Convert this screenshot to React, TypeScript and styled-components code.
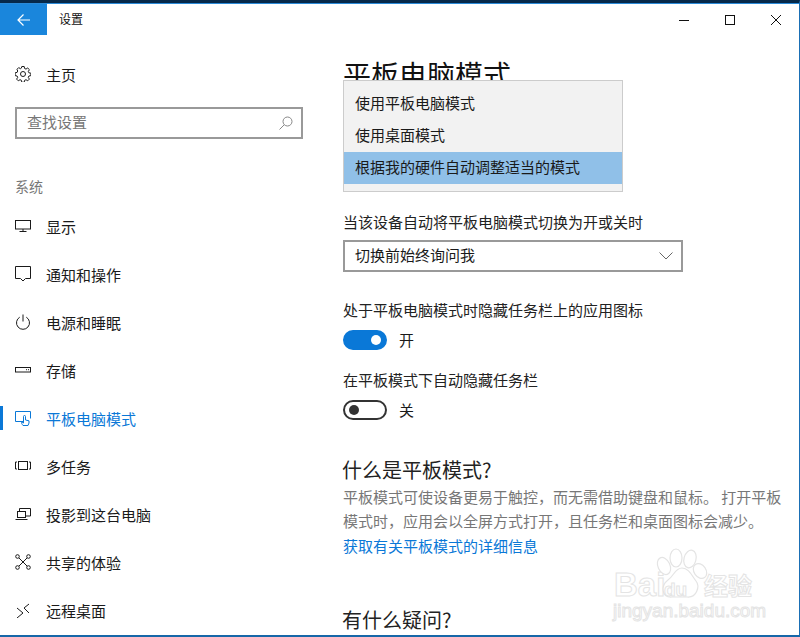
import React from 'react';
import styled, { createGlobalStyle } from 'styled-components';

const GlobalStyle = createGlobalStyle`
  html, body {
    margin: 0;
    padding: 0;
    background: #fff;
  }
  * {
    box-sizing: border-box;
  }
`;

const Win = styled.div`
  width: 800px;
  height: 637px;
  overflow: hidden;
  display: flex;
  flex-direction: column;
  position: relative;
  background: #fff;
  border-top: 3px solid #06294a;
  border-right: 1px solid #1a6fb5;
  border-bottom: 2px solid #1667a8;
  font-family: "Noto Sans CJK SC", "Liberation Sans", sans-serif;
  font-size: 15px;
  color: #1a1a1a;
`;

const TitleBar = styled.div`
  height: 32px;
  flex: none;
  display: flex;
  align-items: center;
  border-top: 1px solid #2a8ad8;
`;

const BackBtn = styled.div`
  width: 47px;
  height: 31px;
  background: #1a86dc;
  display: flex;
  align-items: center;
  justify-content: center;
`;

const TitleText = styled.div`
  margin-left: 12px;
  padding-bottom: 3px;
  font-size: 12px;
  color: #111;
`;

const WinBtns = styled.div`
  margin-left: auto;
  display: flex;
  height: 100%;
`;

const WinBtn = styled.div`
  width: 46px;
  display: flex;
  align-items: center;
  justify-content: center;
`;

const Body = styled.div`
  flex: 1;
  display: flex;
  min-height: 0;
`;

const Sidebar = styled.nav`
  width: 343px;
  flex: none;
  padding-top: 15px;
`;

const NavRow = styled.div<{ $active?: boolean }>`
  height: 48px;
  display: flex;
  align-items: center;
  padding-left: 15px;
  position: relative;
  color: ${(p) => (p.$active ? '#0a78d7' : '#1a1a1a')};
  svg {
    width: 16px;
    height: 16px;
    margin-right: 15px;
    flex: none;
    fill: none;
    stroke: currentColor;
    stroke-width: 1;
  }
  &::before {
    content: '';
    display: ${(p) => (p.$active ? 'block' : 'none')};
    position: absolute;
    left: 0;
    top: 12px;
    width: 3px;
    height: 24px;
    background: #0a78d7;
  }
`;

const Search = styled.div`
  width: 288px;
  height: 32px;
  margin: 9px 0 0 15px;
  border: 2px solid #999;
  display: flex;
  align-items: center;
  justify-content: space-between;
  padding: 0 8px 4px 10px;
  color: #777;
  svg {
    margin-top: 4px;
  }
`;

const GroupLabel = styled.div`
  margin: 35px 0 4px 15px;
  height: 24px;
  line-height: 24px;
  font-size: 14px;
  color: #777;
`;

const Main = styled.main`
  flex: 1;
  padding-right: 30px;
`;

const PageTitle = styled.h1`
  margin: 19px 0 0;
  height: 40px;
  line-height: 40px;
  font-size: 28px;
  font-weight: 400;
  color: #111;
`;

const ModeBlock = styled.div`
  position: relative;
  height: 116px;
`;

const Popup = styled.ul`
  position: absolute;
  top: -14px;
  left: 0;
  width: 280px;
  height: 112px;
  margin: 0;
  padding: 7px 0 0;
  list-style: none;
  background: #f2f2f2;
  border: 1px solid #ccc;
`;

const PopupItem = styled.li<{ $selected?: boolean }>`
  height: 32px;
  line-height: 30px;
  padding-left: 11px;
  background: ${(p) => (p.$selected ? '#90c0e8' : 'transparent')};
  white-space: nowrap;
`;

const FieldLabel = styled.div`
  height: 24px;
  line-height: 24px;
  white-space: nowrap;
  color: #222;
`;

const Select = styled.div`
  width: 340px;
  height: 32px;
  margin: 6px 0 26px;
  border: 2px solid #999;
  display: flex;
  align-items: center;
  justify-content: space-between;
  padding: 0 8px 4px 10px;
  svg {
    margin-top: 4px;
  }
`;

const ToggleRow = styled.div<{ $gap: number }>`
  display: flex;
  align-items: center;
  gap: 12px;
  height: 20px;
  margin-top: 8px;
  margin-bottom: ${(p) => p.$gap}px;
`;

const ToggleText = styled.span`
  padding-bottom: 2px;
`;

const Track = styled.div<{ $on?: boolean }>`
  width: 44px;
  height: 20px;
  border-radius: 10px;
  position: relative;
  background: ${(p) => (p.$on ? '#0a78d7' : '#fff')};
  border: 2px solid ${(p) => (p.$on ? '#0a78d7' : '#333')};
  &::after {
    content: '';
    position: absolute;
    top: 3px;
    width: 10px;
    height: 10px;
    border-radius: 50%;
    left: ${(p) => (p.$on ? '26px' : '4px')};
    background: ${(p) => (p.$on ? '#fff' : '#333')};
  }
`;

const SubHead = styled.h2<{ $top: number }>`
  margin: ${(p) => p.$top}px 0 0 -1px;
  height: 30px;
  line-height: 30px;
  font-size: 20px;
  font-weight: 400;
  color: #222;
  white-space: nowrap;
`;

const Desc = styled.p`
  margin: 0;
  line-height: 24px;
  color: #777;
  width: 440px;
`;

const DocLink = styled.a`
  display: block;
  height: 24px;
  line-height: 26px;
  color: #0a78d7;
`;

const Watermark = styled.div`
  position: absolute;
  left: 612px;
  top: 545px;
  width: 146px;
  height: 76px;
  color: transparent;
  font-family: "Liberation Sans", sans-serif;
  -webkit-text-stroke: 1px #e4e4e4;
`;

const MarkBai = styled.span`
  position: absolute;
  left: 2px;
  top: 19px;
  font-size: 33px;
  font-weight: 700;
  line-height: 36px;
`;

const MarkCn = styled.span`
  position: absolute;
  left: 92px;
  top: 21px;
  font-size: 24px;
  font-weight: 700;
  line-height: 32px;
  font-family: "Noto Sans CJK SC", sans-serif;
`;

const MarkUrl = styled.span`
  position: absolute;
  left: 1px;
  top: 52px;
  font-size: 19px;
  line-height: 22px;
  white-space: nowrap;
`;

const MarkPaw = styled.svg`
  position: absolute;
  left: 40px;
  top: 0;
  width: 70px;
  height: 54px;
  fill: #fff;
  stroke: #e4e4e4;
  stroke-width: 1.2;
`;

const MarkDu = styled.span`
  position: absolute;
  left: 52px;
  top: 32px;
  font-size: 19px;
  font-weight: 700;
  line-height: 20px;
`;

const navItems: { label: string; active?: boolean; icon: React.ReactNode }[] = [
  {
    label: '显示',
    icon: (
      <svg viewBox="0 0 16 16">
        <rect x="0.5" y="2.5" width="15" height="8.5" />
        <path d="M8 11v3M4.5 13.5h7" />
      </svg>
    ),
  },
  {
    label: '通知和操作',
    icon: (
      <svg viewBox="0 0 16 16">
        <path d="M.5 .5h15v12h-5L8 15l-2.5-2.500h-5z" />
      </svg>
    ),
  },
  {
    label: '电源和睡眠',
    icon: (
      <svg viewBox="0 0 16 16">
        <path d="M4.700 3.200a6.500 6.500 0 1 0 6.600 0M8 .5v7" />
      </svg>
    ),
  },
  {
    label: '存储',
    icon: (
      <svg viewBox="0 0 16 16">
        <rect x="0.500" y="5.500" width="15" height="4.500" />
        <path d="M11 7.700h1M13 7.700h1" />
      </svg>
    ),
  },
  {
    label: '平板电脑模式',
    active: true,
    icon: (
      <svg viewBox="0 0 16 16">
        <path d="M8 11.500H.5v-10h15v7" />
        <path d="M8 15.500c-1-1.500-1.500-2-1.500-3l.5-.5 1.500 1V6.500a1 1 0 0 1 2 0V10l3.500.8V13l-1 2.500z" />
      </svg>
    ),
  },
  {
    label: '多任务',
    icon: (
      <svg viewBox="0 0 16 16">
        <rect x="3.500" y="3.500" width="9" height="8" />
        <path d="M2 4H.5v7H2M14 4h1.500v7H14" />
      </svg>
    ),
  },
  {
    label: '投影到这台电脑',
    icon: (
      <svg viewBox="0 0 16 16">
        <path d="M4.500 5V2.500h11v7.500H11" />
        <rect x="2.500" y="5.500" width="8" height="6" />
        <path d="M.5 13.500h12" />
      </svg>
    ),
  },
  {
    label: '共享的体验',
    icon: (
      <svg viewBox="0 0 16 16">
        <circle cx="2.500" cy="2.500" r="1.800" />
        <circle cx="13.500" cy="2.500" r="1.800" />
        <circle cx="2.500" cy="13.500" r="1.800" />
        <circle cx="13.500" cy="13.500" r="1.800" />
        <path d="M4 4l8 8M12 4l-8 8" />
      </svg>
    ),
  },
  {
    label: '远程桌面',
    icon: (
      <svg viewBox="0 0 16 16">
        <path d="M2 6l6 5-6 5M14 2L9 6l5 5" />
      </svg>
    ),
  },
];

const App = () => {
  return (
    <Win>
      <GlobalStyle />
      <TitleBar>
        <BackBtn>
          <svg width="14" height="12" viewBox="0 0 14 12" fill="none" stroke="#fff" strokeWidth="1.2">
            <path d="M13 6H1M6.500 .5L1 6l5.500 5.500" />
          </svg>
        </BackBtn>
        <TitleText>设置</TitleText>
        <WinBtns>
          <WinBtn>
            <svg width="10" height="10" viewBox="0 0 10 10" stroke="#111" fill="none">
              <path d="M0 5.500h10" />
            </svg>
          </WinBtn>
          <WinBtn>
            <svg width="10" height="10" viewBox="0 0 10 10" stroke="#111" fill="none">
              <rect x=".5" y=".5" width="9" height="9" />
            </svg>
          </WinBtn>
          <WinBtn>
            <svg width="10" height="10" viewBox="0 0 10 10" stroke="#111" fill="none">
              <path d="M0 0l10 10M10 0L0 10" />
            </svg>
          </WinBtn>
        </WinBtns>
      </TitleBar>
      <Body>
        <Sidebar>
          <NavRow>
            <svg viewBox="0 0 16 16">
              <circle cx="8" cy="8" r="2.500" />
              <path d="M6.800 .5h2.400l.4 2 1.400.6 1.700-1.100 1.700 1.700-1.100 1.700.6 1.400 2 .4v2.400l-2 .4-.6 1.400 1.100 1.700-1.700 1.700-1.700-1.100-1.400.6-.4 2H6.800l-.4-2-1.400-.6-1.700 1.100-1.700-1.700 1.100-1.700-.6-1.400-2-.4V6.800l2-.4.6-1.400L2 3.300 3.700 1.600l1.700 1.100 1-.6z" />
            </svg>
            主页
          </NavRow>
          <Search>
            查找设置
            <svg width="14" height="14" viewBox="0 0 14 14" fill="none" stroke="#888">
              <circle cx="8.500" cy="5.500" r="4.500" />
              <path d="M5.200 8.800L.5 13.500" />
            </svg>
          </Search>
          <GroupLabel>系统</GroupLabel>
          {navItems.map((item) => (
            <NavRow key={item.label} $active={item.active}>
              {item.icon}
              {item.label}
            </NavRow>
          ))}
        </Sidebar>
        <Main>
          <PageTitle>平板电脑模式</PageTitle>
          <ModeBlock>
            <Popup>
              <PopupItem>使用平板电脑模式</PopupItem>
              <PopupItem>使用桌面模式</PopupItem>
              <PopupItem $selected>根据我的硬件自动调整适当的模式</PopupItem>
            </Popup>
          </ModeBlock>
          <FieldLabel>当该设备自动将平板电脑模式切换为开或关时</FieldLabel>
          <Select>
            切换前始终询问我
            <svg width="14" height="8" viewBox="0 0 14 8" fill="none" stroke="#666">
              <path d="M.5 .5L7 7l6.500-6.500" />
            </svg>
          </Select>
          <FieldLabel>处于平板电脑模式时隐藏任务栏上的应用图标</FieldLabel>
          <ToggleRow $gap={18}>
            <Track $on />
            <ToggleText>开</ToggleText>
          </ToggleRow>
          <FieldLabel>在平板模式下自动隐藏任务栏</FieldLabel>
          <ToggleRow $gap={0}>
            <Track />
            <ToggleText>关</ToggleText>
          </ToggleRow>
          <SubHead $top={35}>什么是平板模式?</SubHead>
          <Desc>
            平板模式可使设备更易于触控，而无需借助键盘和鼠标。 打开平板模式时，应用会以全屏方式打开，且任务栏和桌面图标会减少。
          </Desc>
          <DocLink>获取有关平板模式的详细信息</DocLink>
          <SubHead $top={48}>有什么疑问?</SubHead>
        </Main>
      </Body>
      <Watermark>
        <MarkBai>Bai</MarkBai>
        <MarkPaw viewBox="0 0 70 54">
          <ellipse cx="12" cy="18" rx="6" ry="9" transform="rotate(-25 12 18)" />
          <ellipse cx="24" cy="10" rx="6" ry="9" />
          <ellipse cx="38" cy="11" rx="6" ry="9" transform="rotate(15 38 11)" />
          <ellipse cx="48" cy="23" rx="6" ry="8" transform="rotate(-35 48 23)" />
          <path d="M30 20c7 0 10 8 14 13s1 17-9 16H20C10 50 8 38 16 32c6-4 7-12 14-12z" />
        </MarkPaw>
        <MarkDu>du</MarkDu>
        <MarkCn>经验</MarkCn>
        <MarkUrl>jingyan.baidu.com</MarkUrl>
      </Watermark>
    </Win>
  );
};

export default App;
